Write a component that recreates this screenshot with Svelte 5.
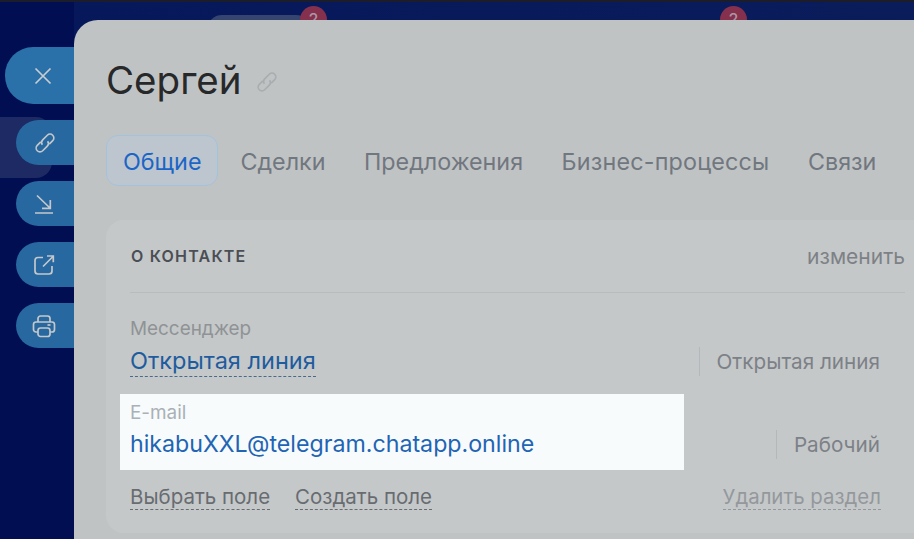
<script>
  const tabs = ['Общие', 'Сделки', 'Предложения', 'Бизнес-процессы', 'Связи'];
</script>

<div class="page">
  <div class="topbar">
    <div class="pill"></div>
    <span class="badge first">2</span>
    <span class="badge second">2</span>
  </div>
  <div class="body">
    <aside class="side">
      <button class="close" aria-label="Закрыть">
        <svg width="20" height="20" viewBox="0 0 20 20" fill="none" stroke="#c9ccce" stroke-width="1.700"><path d="M2.500 2.500l15 15M17.500 2.500l-15 15" /></svg>
      </button>
      <div class="actions">
        <div class="hover-bg"></div>
        <button class="act" aria-label="Ссылка">
          <svg width="24" height="24" viewBox="0 0 22 22" fill="none" stroke="#c4c8ca" stroke-width="1.500"><g transform="rotate(-45 11 11)"><path d="M9 7.500H4.500a3.500 3.500 0 0 0 0 7h6a3.500 3.500 0 0 0 3.400-3" /><path d="M13 14.500h4.500a3.500 3.500 0 0 0 0-7h-6a3.500 3.500 0 0 0-3.400 3" /></g></svg>
        </button>
        <button class="act" aria-label="Скачать">
          <svg width="22" height="22" viewBox="0 0 22 22" fill="none" stroke="#c4c8ca" stroke-width="1.700"><path d="M4 2.500l13 12.500M17.300 7v8.300H9M2 20h18" /></svg>
        </button>
        <button class="act" aria-label="Открыть">
          <svg width="22" height="22" viewBox="0 0 22 22" fill="none" stroke="#c4c8ca" stroke-width="1.700"><path d="M10 3.500H5a3 3 0 0 0-3 3V17a3 3 0 0 0 3 3h11a3 3 0 0 0 3-3v-5" /><path d="M10 12.500L20 2.500M14 2h6.300v6.300" /></svg>
        </button>
        <button class="act" aria-label="Печать">
          <svg width="24" height="24" viewBox="0 0 24 24" fill="none" stroke="#c4c8ca" stroke-width="1.700"><path d="M6 8V4.500a2.500 2.500 0 0 1 2.500-2.500h7A2.500 2.500 0 0 1 18 4.500V8" /><path d="M6 18H4a2.500 2.500 0 0 1-2.500-2.500v-5A2.500 2.500 0 0 1 4 8h16a2.500 2.500 0 0 1 2.500 2.500v5A2.500 2.500 0 0 1 20 18h-2" /><rect x="6" y="14" width="12" height="8.500" rx="2.500" /><path d="M15.500 11h3" /></svg>
        </button>
      </div>
    </aside>

    <main class="panel">
      <h1>Сергей
        <svg class="title-link" width="24" height="24" viewBox="0 0 22 22" fill="none" stroke="#a9adaf" stroke-width="1.500"><g transform="rotate(-45 11 11)"><path d="M9 7.500H4.500a3.500 3.500 0 0 0 0 7h6a3.500 3.500 0 0 0 3.400-3" /><path d="M13 14.500h4.500a3.500 3.500 0 0 0 0-7h-6a3.500 3.500 0 0 0-3.400 3" /></g></svg>
      </h1>

      <nav class="tabs">
        {#each tabs as tab, i}
          <span class="tab" class:active={i === 0}>{tab}</span>
        {/each}
      </nav>

      <section class="card">
        <header class="card-head">
          <span class="card-title">О КОНТАКТЕ</span>
          <span class="edit">изменить</span>
        </header>

        <div class="row messenger">
          <div class="field">
            <div class="label">Мессенджер</div>
            <span class="value dashed">Открытая линия</span>
          </div>
          <span class="kind">Открытая линия</span>
        </div>

        <div class="row email">
          <div class="field highlight">
            <div class="label">E-mail</div>
            <span class="value">hikabuXXL@telegram.chatapp.online</span>
          </div>
          <span class="kind">Рабочий</span>
        </div>

        <footer class="card-foot">
          <span class="link">Выбрать поле</span>
          <span class="link">Создать поле</span>
          <span class="link remove">Удалить раздел</span>
        </footer>
      </section>
    </main>
  </div>
</div>

<style>
  :global(body) {
    margin: 0;
    overflow: hidden;
    background: #031258;
  }

  .page {
    width: 914px;
    height: 539px;
    overflow: hidden;
    display: flex;
    flex-direction: column;
    font-family: Inter, "Noto Sans", sans-serif;
    background: linear-gradient(90deg, #010e52 0, #010e52 74px, #06185a 74px, #0a1c5a 100%);
  }

  .topbar {
    position: relative;
    height: 20px;
    flex-shrink: 0;
    border-top: 2px solid #1b1d2b;
    box-sizing: border-box;
  }

  .pill {
    position: absolute;
    left: 207px;
    top: 13px;
    width: 104px;
    height: 30px;
    border-radius: 15px;
    background: #35456f;
  }

  .badge {
    position: absolute;
    top: 4px;
    width: 27px;
    height: 27px;
    border-radius: 50%;
    background: #85304c;
    color: #ac98a4;
    font-size: 16px;
    font-weight: 500;
    line-height: 27px;
    text-align: center;
  }

  .first { left: 300px; }
  .second { left: 720px; }

  .body {
    flex: 1;
    display: flex;
    min-height: 0;
  }

  .side {
    width: 74px;
    flex-shrink: 0;
    display: flex;
    flex-direction: column;
    align-items: flex-end;
    padding-top: 27px;
    box-sizing: border-box;
  }

  button {
    display: flex;
    align-items: center;
    border: 0;
    padding: 0;
    background: #2a70a9;
  }

  .close {
    width: 69px;
    height: 57px;
    padding-left: 28px;
    border-radius: 28px 0 0 28px;
  }

  .actions {
    position: relative;
    display: flex;
    flex-direction: column;
    gap: 16px;
    margin-top: 16px;
  }

  .hover-bg {
    position: absolute;
    left: -16px;
    top: -3px;
    width: 52px;
    height: 61px;
    border-radius: 0 16px 16px 0;
    background: #1d2a63;
  }

  .act {
    position: relative;
    width: 58px;
    height: 45px;
    padding-left: 17px;
    border-radius: 23px 0 0 23px;
    background: #2868a0;
  }

  .act:last-child {
    padding-left: 16px;
  }

  .panel {
    flex: 1;
    min-width: 0;
    position: relative;
    padding: 0 0 0 32px;
    border-radius: 24px 0 0 0;
    background: #c0c3c4;
    overflow: hidden;
  }

  h1 {
    display: flex;
    align-items: center;
    gap: 13px;
    margin: 37px 0 0;
    height: 47px;
    font-size: 38.500px;
    line-height: 47px;
    font-weight: 400;
    color: #272829;
  }

  .title-link {
    margin-top: 3px;
  }

  .tabs {
    display: flex;
    margin-top: 31px;
    white-space: nowrap;
  }

  .tab {
    box-sizing: border-box;
    height: 51px;
    padding: 0 16px;
    border: 1px solid transparent;
    font-size: 23.300px;
    line-height: 51px;
    color: #71777f;
  }

  .tab.active {
    margin-right: 21px;
    border-color: #a3c2de;
    border-radius: 12px;
    background: #bdc6cf;
    color: #1b65c6;
  }

  .tab:nth-child(n+2) {
    padding: 0;
    margin-right: 36.500px;
  }

  .tab:nth-child(4) {
    letter-spacing: 0.200px;
  }

  .card {
    box-sizing: border-box;
    width: 840px;
    height: 313px;
    margin-top: 34px;
    padding: 0 66px 0 24px;
    border-radius: 18px;
    background: #c5c8c9;
  }

  .card-head {
    display: flex;
    justify-content: space-between;
    align-items: center;
    height: 73px;
    margin-right: -25px;
    box-sizing: border-box;
    border-bottom: 1px solid #b9bcbf;
    white-space: nowrap;
  }

  .card-title {
    padding-left: 1px;
    font-size: 16px;
    font-weight: 600;
    letter-spacing: 1.200px;
    color: #4a4e55;
  }

  .edit {
    font-size: 21px;
    color: #7d8186;
  }

  .row {
    position: relative;
  }

  .messenger {
    height: 101px;
    padding-top: 24px;
    box-sizing: border-box;
  }

  .label {
    font-size: 18.900px;
    line-height: 24px;
    color: #8f9396;
  }

  .value {
    display: inline-block;
    font-size: 23.200px;
    line-height: 30px;
    margin-top: 4px;
    color: #1e5c9e;
    white-space: nowrap;
  }

  .dashed {
    margin-top: 5px;
    font-size: 23.500px;
    border-bottom: 1px dashed #4a6a8c;
  }

  .kind {
    position: absolute;
    right: 0;
    padding: 1px 0 0 17px;
    border-left: 1px solid #b5b8ba;
    font-size: 20.700px;
    line-height: 28px;
    color: #7c8187;
    white-space: nowrap;
  }

  .messenger .kind { top: 54px; }
  .email .kind { top: 36px; }

  .email {
    height: 76px;
  }

  .highlight {
    box-sizing: border-box;
    width: 564px;
    height: 76px;
    margin-left: -10px;
    padding: 7px 0 0 10px;
    background: #f7fbfc;
  }

  .highlight .label {
    color: #aab0b6;
  }

  .highlight .value {
    color: #2264b4;
  }

  .card-foot {
    display: flex;
    gap: 25px;
    margin-top: 15px;
    white-space: nowrap;
  }

  .link {
    font-size: 20.500px;
    line-height: 24px;
    color: #686c71;
    border-bottom: 1px dashed #686c71;
  }

  .remove {
    margin: 0 -1px 0 auto;
    font-size: 20.400px;
    color: #94989c;
    border-bottom-color: #94989c;
  }
</style>
